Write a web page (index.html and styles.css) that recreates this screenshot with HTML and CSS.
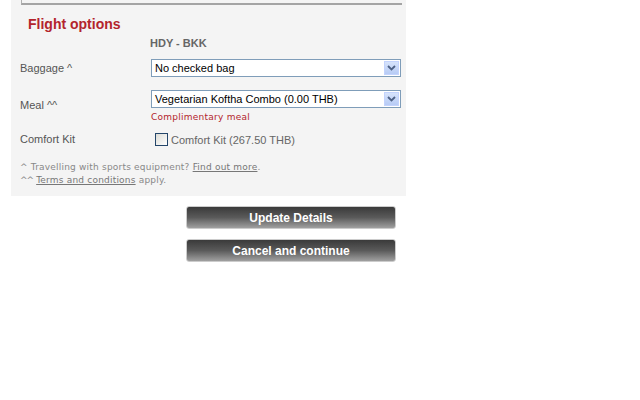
FILE: index.html
```html
<!DOCTYPE html>
<html>
<head>
<meta charset="utf-8">
<link rel="stylesheet" href="styles.css">
</head>
<body>
<div class="panel">
  <div class="topline"></div>
  <h2 class="title">Flight options</h2>
  <div class="route">HDY - BKK</div>
  <div class="form">
    <div class="lbl">Baggage ^</div>
    <div class="ctl">
      <div class="select"><span class="val">No checked bag</span><span class="arrow"><svg width="9" height="6" viewBox="0 0 9 6"><path d="M1 1 L4.5 4.5 L8 1" fill="none" stroke="#4d6185" stroke-width="1.8"/></svg></span></div>
    </div>
    <div class="lbl">Meal ^^</div>
    <div class="ctl meal">
      <div class="select"><span class="val">Vegetarian Koftha Combo (0.00 THB)</span><span class="arrow"><svg width="9" height="6" viewBox="0 0 9 6"><path d="M1 1 L4.5 4.5 L8 1" fill="none" stroke="#4d6185" stroke-width="1.8"/></svg></span></div>
      <div class="note">Complimentary meal</div>
    </div>
    <div class="lbl">Comfort Kit</div>
    <div class="ctl kit">
      <span class="box"></span><span class="kitlbl">Comfort Kit (267.50 THB)</span>
    </div>
  </div>
  <div class="foot">
    <div>^ Travelling with sports equipment? <a href="#">Find out more</a>.</div>
    <div><span class="carets">^^</span> <a href="#">Terms and conditions</a> apply.</div>
  </div>
</div>
<div class="buttons">
  <button class="btn">Update Details</button>
  <button class="btn">Cancel and continue</button>
</div>
</body>
</html>
```

FILE: styles.css
```css
html, body {
  margin: 0;
  padding: 0;
  background: #fff;
  font-family: "Liberation Sans", Arial, sans-serif;
}
.panel {
  margin-left: 11px;
  width: 395px;
  background: #f4f4f4;
  padding-bottom: 9px;
  box-sizing: border-box;
}
.topline {
  margin-left: 10px;
  width: 380px;
  height: 3px;
  border-left: 1px solid #b0b0b0;
  border-bottom: 2px solid #a4a4a4;
}
.title {
  margin: 0;
  padding: 11px 0 0 17px;
  font-size: 14px;
  line-height: 16px;
  font-weight: bold;
  color: #b3242c;
}
.route {
  margin: 5px 0 0 139px;
  font-size: 11px;
  line-height: 13px;
  font-weight: bold;
  color: #666;
}
.form {
  display: grid;
  grid-template-columns: 131px 250px;
  align-items: center;
  row-gap: 10px;
  margin: 9px 0 0 9px;
}
.lbl {
  font-size: 11px;
  color: #555;
  line-height: 13px;
}
.meal {
  padding-top: 3px;
}
.select {
  height: 18px;
  box-sizing: border-box;
  border: 1px solid #7f9db9;
  background: #fff;
  display: flex;
  align-items: center;
  justify-content: space-between;
  padding-left: 3px;
}
.val {
  font-size: 11px;
  color: #000;
}
.arrow {
  width: 15px;
  height: 14px;
  margin-right: 1px;
  background: linear-gradient(#d6e3fb, #b7cbf5);
  border: 1px solid #c3d3fd;
  box-sizing: border-box;
  display: flex;
  align-items: center;
  justify-content: center;
}
.note {
  margin-top: 3px;
  font-family: "DejaVu Sans", Verdana, sans-serif;
  font-size: 9px;
  letter-spacing: 0.25px;
  color: #b3242c;
  line-height: 12px;
}
.kit {
  display: flex;
  align-items: center;
  padding-left: 4px;
}
.box {
  width: 13px;
  height: 13px;
  box-sizing: border-box;
  border: 1px solid #24466a;
  background: linear-gradient(135deg, #dcdcd6, #fff);
  margin-right: 3px;
}
.kitlbl {
  font-size: 11px;
  color: #666;
}
.foot {
  margin: 15px 0 0 9px;
  font-family: "DejaVu Sans", Verdana, sans-serif;
  font-size: 9px;
  letter-spacing: 0.2px;
  line-height: 13px;
  color: #888;
}
.carets {
  letter-spacing: -1px;
}
.foot a {
  color: #777;
}
.buttons {
  display: flex;
  flex-direction: column;
  gap: 10px;
  margin: 10px 0 0 186px;
  width: 210px;
}
.btn {
  height: 23px;
  width: 210px;
  border: 1px solid #ccc;
  border-radius: 3px;
  background: linear-gradient(#3a3a3a, #5a5a5a 50%, #a0a0a0);
  color: #fff;
  font-family: "Liberation Sans", Arial, sans-serif;
  font-weight: bold;
  font-size: 12px;
  padding: 0;
  text-align: center;
}
```
